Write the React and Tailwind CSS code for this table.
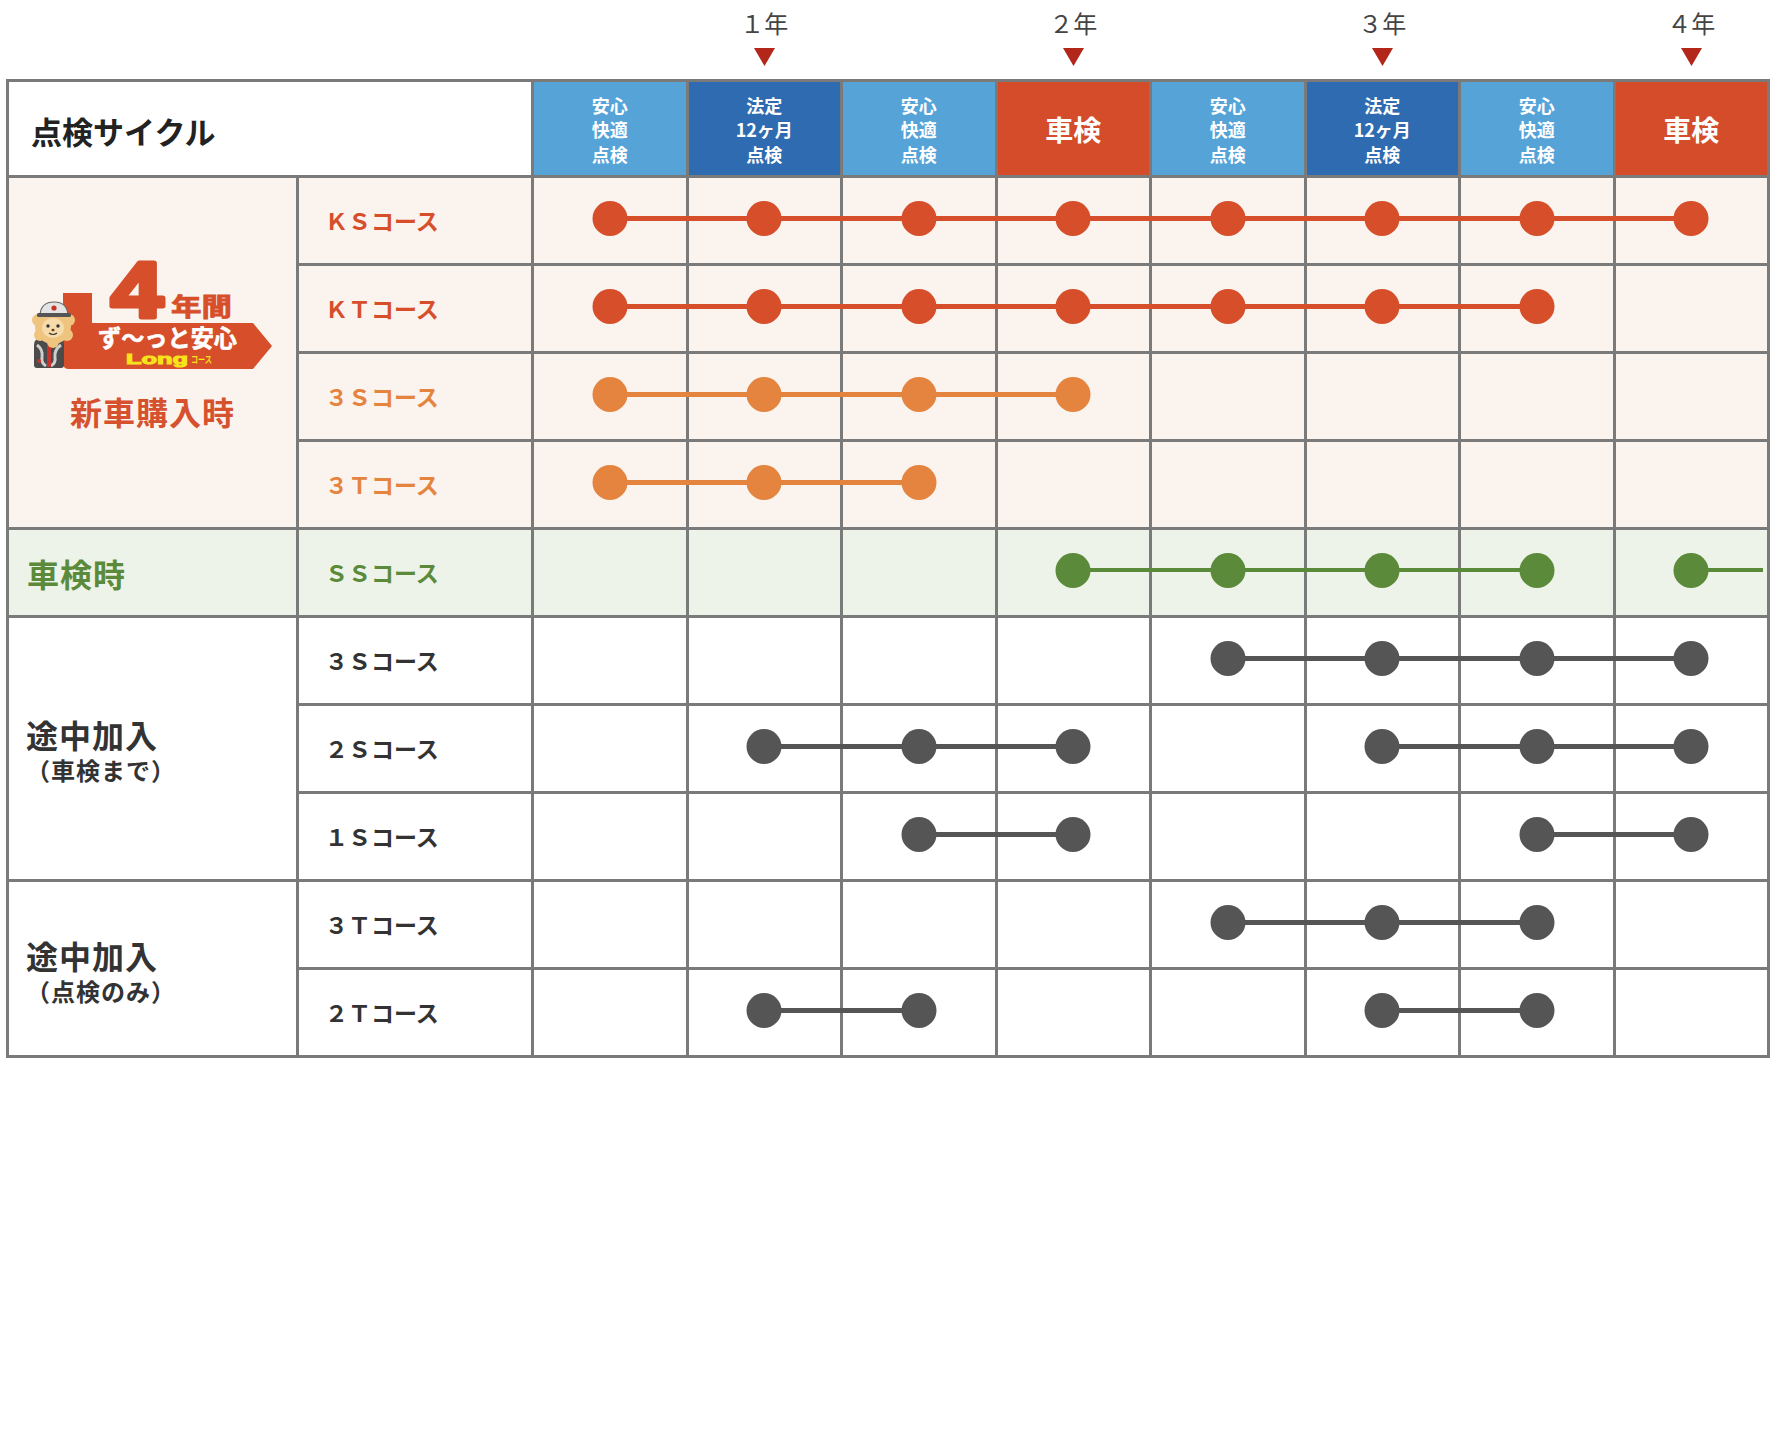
import React from "react";

const RED = { text: "text-[#d64f2a]", bg: "bg-[#fbf3ee]", color: "bg-[#d64f2a]", line: "top-[38px] h-[5px]" };
const ORANGE = { text: "text-[#e4843f]", bg: "bg-[#fbf3ee]", color: "bg-[#e4843f]", line: "top-[38px] h-[5px]" };
const GREEN = { text: "text-[#5b8a3a]", bg: "bg-[#edf3e8]", color: "bg-[#5b8a3a]", line: "top-[38px] h-[4px]" };
const GRAY = { text: "text-[#333333]", bg: "bg-white", color: "bg-[#555555]", line: "top-[38px] h-[5px]" };

const rows = [
  { label: "ＫＳコース", s: RED, segs: [[0, 7]] },
  { label: "ＫＴコース", s: RED, segs: [[0, 6]] },
  { label: "３Ｓコース", s: ORANGE, segs: [[0, 3]] },
  { label: "３Ｔコース", s: ORANGE, segs: [[0, 2]] },
  { label: "ＳＳコース", s: GREEN, segs: [[3, 6], [7, 7]], tail: true },
  { label: "３Ｓコース", s: GRAY, segs: [[4, 7]] },
  { label: "２Ｓコース", s: GRAY, segs: [[1, 3], [5, 7]] },
  { label: "１Ｓコース", s: GRAY, segs: [[2, 3], [6, 7]] },
  { label: "３Ｔコース", s: GRAY, segs: [[4, 6]] },
  { label: "２Ｔコース", s: GRAY, segs: [[1, 2], [5, 6]] },
];

const headers = ["A", "H", "A", "S", "A", "H", "A", "S"];

function HeaderCell({ t }) {
  if (t === "S") {
    return (
      <div className="bg-[#d54c2a] flex items-center justify-center text-white text-[28px] font-bold leading-none">
        車検
      </div>
    );
  }
  const lines = t === "A" ? ["安心", "快適", "点検"] : ["法定", "12ヶ月", "点検"];
  return (
    <div
      className={`${t === "A" ? "bg-[#56a3d8]" : "bg-[#2f6bb0]"} flex flex-col items-center justify-center text-white text-[18px] font-bold leading-[24.5px] pt-[2px]`}
    >
      {lines.map((l, i) => (
        <span key={i}>{l}</span>
      ))}
    </div>
  );
}

function DataCell({ row, c }) {
  const seg = row.segs.find(([a, b]) => c >= a && c <= b);
  const s = row.s;
  const dot = !!seg;
  const left = seg && c > seg[0];
  const right = seg && c < seg[1];
  const tail = row.tail && c === 7;
  return (
    <div className={`relative ${s.bg}`}>
      {left && <div className={`absolute left-[-3px] right-1/2 ${s.line} ${s.color}`} />}
      {right && <div className={`absolute left-1/2 right-[-3px] ${s.line} ${s.color}`} />}
      {tail && <div className={`absolute left-1/2 right-[4px] ${s.line} ${s.color}`} />}
      {dot && (
        <div className={`absolute left-1/2 top-[23px] h-[35px] w-[35px] -translate-x-1/2 rounded-full ${s.color}`} />
      )}
    </div>
  );
}

function Logo() {
  return (
    <svg width="240" height="112" viewBox="0 0 240 112" className="overflow-visible">
      <path d="M30 36 H59 V66 H220 L239 89 L220 112 H36 Q30 112 30 106 Z" fill="#d64f2a" />
      <text
        x="78"
        y="60"
        fontSize="78"
        fontWeight="700"
        fill="#d64f2a"
        stroke="#d64f2a"
        strokeWidth="5"
        strokeLinejoin="round"
        fontFamily="'Liberation Sans', Arial, sans-serif"
        textLength="52"
        lengthAdjust="spacingAndGlyphs"
      >
        4
      </text>
      <text
        x="138"
        y="59"
        fontSize="25"
        fontWeight="700"
        fill="#d64f2a"
        stroke="#d64f2a"
        strokeWidth="0.8"
        fontFamily="'Noto Sans CJK JP', sans-serif"
        textLength="61"
        lengthAdjust="spacingAndGlyphs"
      >
        年間
      </text>
      <text
        x="65"
        y="90"
        fontSize="24"
        fontWeight="700"
        fill="#ffffff"
        stroke="#ffffff"
        strokeWidth="0.6"
        fontFamily="'Noto Sans CJK JP', sans-serif"
        textLength="139"
        lengthAdjust="spacingAndGlyphs"
      >
        ず〜っと安心
      </text>
      <text
        x="93"
        y="107"
        fontSize="15"
        fontWeight="700"
        fill="#f7e21b"
        stroke="#f7e21b"
        strokeWidth="1"
        fontFamily="'Liberation Sans', Arial, sans-serif"
        textLength="62"
        lengthAdjust="spacingAndGlyphs"
      >
        Long
      </text>
      <text
        x="158"
        y="106"
        fontSize="9"
        fontWeight="700"
        fill="#f7e21b"
        fontFamily="'Noto Sans CJK JP', sans-serif"
        textLength="21"
        lengthAdjust="spacingAndGlyphs"
      >
        コース
      </text>
      {/* mascot body */}
      <path d="M1 88 Q1 81 9 81 H25 Q31 81 31 88 V108 Q31 111 28 111 H4 Q1 111 1 108 Z" fill="#4b4b4b" />
      <path d="M4 88 Q10 92 9 100 Q8 106 13 109" stroke="#cfcfcf" strokeWidth="3" fill="none" />
      <path d="M28 88 Q21 93 22 100 Q23 106 18 109" stroke="#cfcfcf" strokeWidth="3" fill="none" />
      <rect x="14" y="85" width="4" height="25" fill="#c8322a" />
      <circle cx="6" cy="104" r="2" fill="#c8322a" />
      {/* mane */}
      <circle cx="20" cy="69" r="18" fill="#efc47f" />
      <circle cx="5" cy="63" r="6" fill="#efc47f" />
      <circle cx="36" cy="63" r="6" fill="#efc47f" />
      <circle cx="7" cy="78" r="6" fill="#efc47f" />
      <circle cx="34" cy="78" r="6" fill="#efc47f" />
      <circle cx="20" cy="85" r="6" fill="#efc47f" />
      {/* face */}
      <ellipse cx="20" cy="71" rx="11" ry="10" fill="#f7dcab" />
      <circle cx="15" cy="69" r="1.7" fill="#333" />
      <circle cx="25" cy="69" r="1.7" fill="#333" />
      <ellipse cx="20" cy="73" rx="1.6" ry="1.2" fill="#6b3d1e" />
      <path d="M16 76 Q20 79 24 76" stroke="#333" strokeWidth="1.2" fill="none" />
      {/* cap */}
      <path d="M7 58 Q8 45 21 45 Q34 45 35 58 Z" fill="#e4e4e4" stroke="#666" strokeWidth="1.2" />
      <rect x="4" y="56" width="34" height="4" rx="1.5" fill="#555" />
      <circle cx="21" cy="51" r="2.6" fill="#c8322a" />
    </svg>
  );
}

export default function App() {
  const font = { fontFamily: "'Noto Sans CJK JP', 'Noto Sans', sans-serif" };
  return (
    <div className="w-[1770px] h-[1454px] bg-white" style={font}>
      {/* year labels */}
      <div className="ml-[6px] w-[1764px] h-[79px] px-[3px] grid grid-cols-[287px_232px_repeat(8,minmax(0,1fr))] gap-x-[3px]">
        {[4, 6, 8, 10].map((col, i) => (
          <div
            key={col}
            className={`${["col-start-4", "col-start-6", "col-start-8", "col-start-10"][i]} row-start-1 flex flex-col items-center pt-[10px]`}
          >
            <span className="text-[24px] leading-[26px] text-[#444444]">{["１年", "２年", "３年", "４年"][i]}</span>
            <svg width="21" height="18" viewBox="0 0 21 18" className="mt-[12px]">
              <polygon points="0,0 21,0 10.5,18" fill="#b3261a" />
            </svg>
          </div>
        ))}
      </div>

      {/* table */}
      <div className="ml-[6px] w-[1764px] p-[3px] gap-[3px] bg-[#7a7a7a] grid grid-cols-[287px_232px_repeat(8,minmax(0,1fr))] grid-rows-[93px_repeat(10,85px)]">
        <div className="col-span-2 bg-white flex items-center pl-[22px] pt-[6px] text-[31px] font-bold text-[#222222]">
          点検サイクル
        </div>
        {headers.map((t, i) => (
          <HeaderCell key={i} t={t} />
        ))}

        {rows.map((row, ri) => (
          <React.Fragment key={ri}>
            {ri === 0 && (
              <div className="row-span-4 bg-[#fbf3ee] flex flex-col items-center justify-center pb-[19px]">
                <Logo />
                <div className="mt-[24px] text-[32px] leading-[36px] tracking-[1px] font-bold text-[#d6512d]">
                  新車購入時
                </div>
              </div>
            )}
            {ri === 4 && (
              <div className="bg-[#edf3e8] flex items-center pl-[18px] text-[32px] tracking-[1px] font-bold text-[#5b8a3a]">
                車検時
              </div>
            )}
            {ri === 5 && (
              <div className="row-span-3 bg-white flex flex-col justify-center pl-[17px] pt-[2px] text-[#333333] font-bold">
                <span className="text-[32px] leading-[40px] tracking-[1px]">途中加入</span>
                <span className="text-[24px] leading-[32px] tracking-[1px]">（車検まで）</span>
              </div>
            )}
            {ri === 8 && (
              <div className="row-span-2 bg-white flex flex-col justify-center pl-[17px] pt-[4px] text-[#333333] font-bold">
                <span className="text-[32px] leading-[40px] tracking-[1px]">途中加入</span>
                <span className="text-[24px] leading-[32px] tracking-[1px]">（点検のみ）</span>
              </div>
            )}
            <div className={`${row.s.bg} ${row.s.text} flex items-center pl-[26px] text-[23px] font-bold`}>
              {row.label}
            </div>
            {Array.from({ length: 8 }).map((_, c) => (
              <DataCell key={c} row={row} c={c} />
            ))}
          </React.Fragment>
        ))}
      </div>
    </div>
  );
}
